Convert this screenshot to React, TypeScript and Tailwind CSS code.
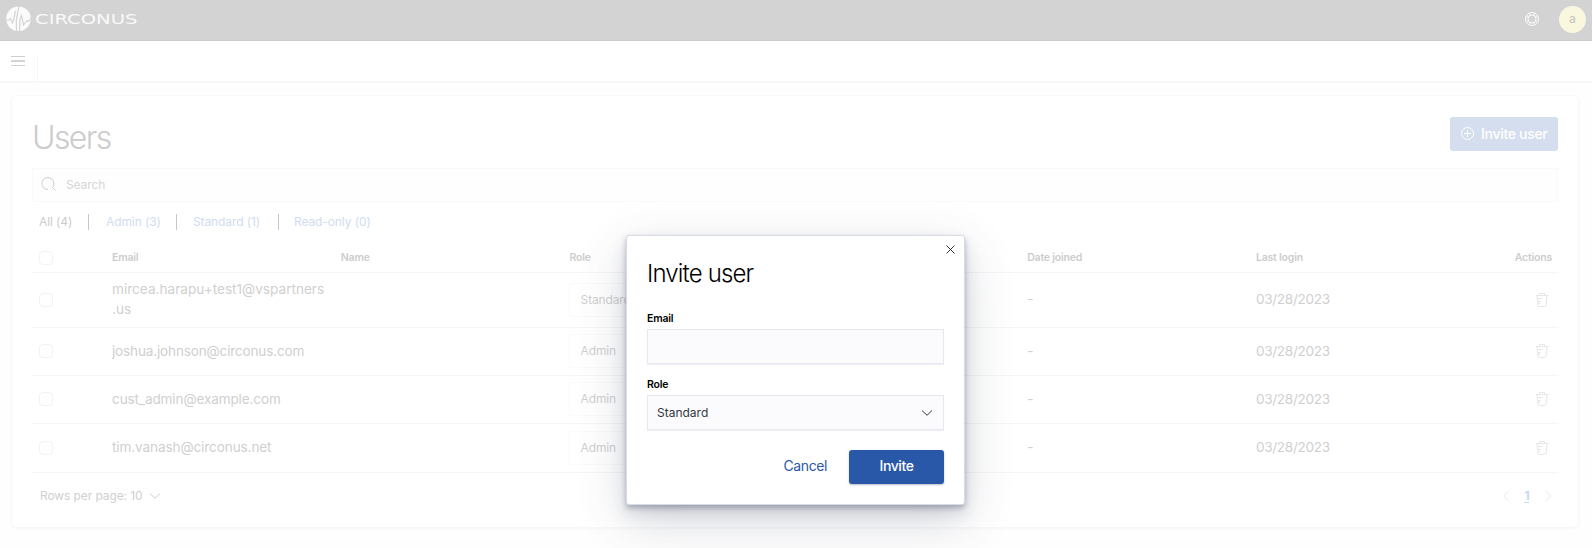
import React from "react";

const HEAD = "text-[10.5px] font-semibold tracking-[-0.2px] text-[#cdcdcd]";
const COLS = "grid grid-cols-[72px_228.8px_228.8px_228.8px_228.8px_228.8px_228.8px_1fr] items-center pl-2";

const rows = [
  { email: "mircea.harapu+test1@vspartners\n.us", role: "Standard", h: "h-[55px]", text: "tracking-[0px] -mt-px" },
  { email: "joshua.johnson@circonus.com", role: "Admin", h: "h-12", text: "tracking-[-0.180px]" },
  { email: "cust_admin@example.com", role: "Admin", h: "h-12", text: "tracking-[-0.140px]" },
  { email: "tim.vanash@circonus.net", role: "Admin", h: "h-[49px]", text: "tracking-[-0.120px] -mt-px" },
];

function Checkbox() {
  return <span className="-ml-px block h-[14px] w-[14px] rounded-[4px] border border-[#f2f2f4] bg-white" />;
}

function Logo() {
  return (
    <svg width="132" height="26" viewBox="0 0 132 26" fill="none">
      <circle cx="12.5" cy="12.8" r="12.3" fill="#fbfbfb" />
      <path d="M0 14h3.200l1.300-1.400L6.300 17l1.300-3.200L9.500 5M10.500 26L10.300 14 13 0M13.600 26l.3-12.500L15.500 9.500l2 9.500 3.500-4.500 1.500 1L25 12" stroke="#d3d3d3" strokeWidth="1.200" />
      <text x="29" y="18" fill="#f9f9f9" fontFamily="DejaVu Sans, sans-serif" fontSize="14.500" textLength="102.500" lengthAdjust="spacingAndGlyphs">CIRCONUS</text>
    </svg>
  );
}

function Trash() {
  return (
    <svg width="16" height="16" viewBox="0 0 16 16" fill="none" stroke="#e6e6e6">
      <path d="M1.500 3.500h13M5.500 3.500v-2h5v2M3 4l1 9.500Q4.200 14.500 5.500 14.500h5q1.300 0 1.500-1L13 4M3.500 6.500h5M4 9.500h3M4 11.500h2" />
    </svg>
  );
}

function Chevron({ color, dir = "down" }: { color: string; dir?: "down" | "left" | "right" }) {
  const d = { down: "M3 5.500l5 4.800L13 5.500", left: "M10.500 3L5.500 8l5 5", right: "M5.500 3l5 5-5 5" }[dir];
  return (
    <svg width="16" height="16" viewBox="0 0 16 16" fill="none" stroke={color}>
      <path d={d} />
    </svg>
  );
}

export default function App() {
  return (
    <div className="relative h-[548px] w-[1592px] overflow-hidden bg-[#fefefe] font-['Inter',sans-serif]">
      <header className="flex h-[41px] items-center justify-between border-b border-[#cccccc] bg-[#d3d3d3] pr-[6px] pb-[2px] pl-[6px]">
        <Logo />
        <div className="flex items-center gap-5">
          <svg width="14" height="14" viewBox="0 0 14 14" fill="none" stroke="#fff" strokeWidth="0.9">
            <circle cx="7" cy="7" r="6.500" />
            <circle cx="7" cy="7" r="4" />
            <path d="M1.500 4.500l2 .8M4.500 1.500l.8 2M9.500 1.500l-.8 2M12.500 4.500l-2 .8M1.500 9.500l2-.8M4.500 12.500l.8-2M9.500 12.500l-.8-2M12.500 9.500l-2-.8" />
          </svg>
          <span className="flex h-[27px] w-[27px] items-center justify-center rounded-full bg-[#faf7df] text-xs font-medium text-[#c8c8c0]">a</span>
        </div>
      </header>
      <nav className="flex h-[41px] items-end border-b border-[#f6f6f7] bg-white shadow-[0_1px_1px_#fafafa]">
        <div className="flex h-[27px] w-[38px] flex-col gap-[3px] border-r border-[#f6f6f7] pt-[1.500px] pl-[11px]">
          <span className="h-[1.500px] w-[14px] bg-[#cfcfcf]" />
          <span className="h-[1.500px] w-[14px] bg-[#d3d3d3]" />
          <span className="h-[1.500px] w-[14px] bg-[#d3d3d3]" />
        </div>
      </nav>

      <main className="mt-[13px] ml-[11px] flex h-[433px] w-[1568px] flex-col rounded-[5px] border border-[#f8f8f9] bg-white px-5 pt-px shadow-[0_1px_2px_#f7f7f8]">
        <div className="flex h-[71px] items-start justify-between pt-5">
          <h1 className="mt-px text-[32px] leading-10 font-light tracking-[-1.600px] text-[#cccccc]">Users</h1>
          <button className="flex h-[34px] w-[108px] items-center gap-[7px] rounded-[3px] bg-[#d5deee] pb-[2px] pl-[11px] text-[14px] font-medium tracking-[-0.300px] text-white">
            <svg className="mt-px" width="13" height="13" viewBox="0 0 13 13" fill="none" stroke="#fff">
              <circle cx="6.500" cy="6.500" r="6" />
              <path d="M6.500 3v7M3 6.500h7" />
            </svg>
            Invite user
          </button>
        </div>
        <div className="flex h-[34px] items-center gap-[9px] border border-[#fafafb] bg-[#fefefe] pb-px pl-[8px] text-xs tracking-[-0.100px] text-[#d6d6d6]">
          <svg className="-mt-[2px]" width="16" height="16" viewBox="0 0 16 16" fill="none" stroke="#cccccc">
            <path d="M7 13.500A6 6 0 1 1 12 10.500M11 11l3.500 3.500" />
          </svg>
          Search
        </div>
        <div className="flex h-[39px] items-center pl-[7px] text-xs tracking-[-0.100px] text-[#d0dcf0]">
          <span className="w-[49px] text-[#cccccc]">All (4)</span>
          <span className="h-4 w-px bg-[#c6c6c6]" />
          <span className="w-[87px] pl-[17px]">Admin (3)</span>
          <span className="h-4 w-px bg-[#c6c6c6]" />
          <span className="w-[101px] pl-4">Standard (1)</span>
          <span className="h-4 w-px bg-[#c6c6c6]" />
          <span className="pl-[15px]">Read-only (0)</span>
        </div>
        <div className={`${COLS} h-8 border-b border-[#f6f6f7] pt-[2px] ${HEAD}`}>
          <Checkbox />
          <span>Email</span>
          <span>Name</span>
          <span>Role</span>
          <span>Date invited</span>
          <span>Date joined</span>
          <span>Last login</span>
          <span className="pr-[6px] text-right">Actions</span>
        </div>
        {rows.map((r) => (
          <div key={r.email} className={`${COLS} ${r.h} border-b border-[#f6f6f7] pb-px text-[13.600px] tracking-[-0.140px] text-[#d0d0d0]`}>
            <Checkbox />
            <span className={`leading-5 whitespace-pre ${r.text}`}>{r.email}</span>
            <span />
            <span className="-ml-px flex h-[34px] w-[214px] items-center border border-[#fafafb] pl-[11px] text-xs">{r.role}</span>
            <span>-</span>
            <span>-</span>
            <span className="tracking-[-0.330px]">03/28/2023</span>
            <span className="flex justify-end pr-[8px]"><Trash /></span>
          </div>
        ))}
        <div className="flex h-12 items-center justify-between pr-[2px] pb-[2px] pl-2 text-xs tracking-[-0.100px] text-[#d0d0d0]">
          <span className="flex items-center gap-[5px]">Rows per page: 10 <Chevron color="#d0d0d0" /></span>
          <span className="flex items-center gap-[9px]">
            <Chevron color="#e8e8e8" dir="left" />
            <b className="w-[8px] text-center font-bold text-[#c8d6ee] underline underline-offset-2">1</b>
            <Chevron color="#e8e8e8" dir="right" />
          </span>
        </div>
      </main>

      <section className="absolute top-[235px] left-[626px] flex h-[270px] w-[339px] flex-col rounded-[3px] border border-[#d9dbe4] bg-white px-5 shadow-[0_3px_5px_rgba(60,70,95,0.32),0_8px_16px_rgba(60,70,95,0.16),0_16px_50px_rgba(60,70,95,0.2)]">
        <svg className="absolute top-[9px] right-[9px]" width="9" height="9" viewBox="0 0 9 9" fill="none" stroke="#343741">
          <path d="M0.500 0.500l8 8M8.500 0.500l-8 8" />
        </svg>
        <h2 className="mt-[22px] text-[24px] leading-8 font-light tracking-[-0.850px] text-black">Invite user</h2>
        <label className="mt-[21px] text-[10.500px] leading-4 font-semibold tracking-[-0.200px] text-black">Email</label>
        <div className="mt-[2px] h-[35px] border border-[#e6e7ef] bg-[#fbfbfd] shadow-[0_1px_1px_#f0f0f5]" />
        <label className="mt-[13px] text-[10.500px] leading-4 font-semibold tracking-[-0.200px] text-black">Role</label>
        <div className="mt-[2px] flex h-[35px] items-center justify-between border border-[#e6e7ef] bg-[#fbfbfd] pr-2 pl-[9px] text-xs text-[#343741] shadow-[0_1px_1px_#f0f0f5]">
          Standard
          <Chevron color="#343741" />
        </div>
        <div className="mt-5 flex h-[34px] items-center justify-end gap-[22px] text-[14px] tracking-[-0.400px] text-[#2a58a8]">
          <button className="pb-[3px]">Cancel</button>
          <button className="h-[34px] w-[95px] rounded-[3px] bg-[#2a58a8] pb-[3px] font-medium text-white shadow-[0_1px_2px_rgba(40,60,100,0.35)]">Invite</button>
        </div>
      </section>
    </div>
  );
}
